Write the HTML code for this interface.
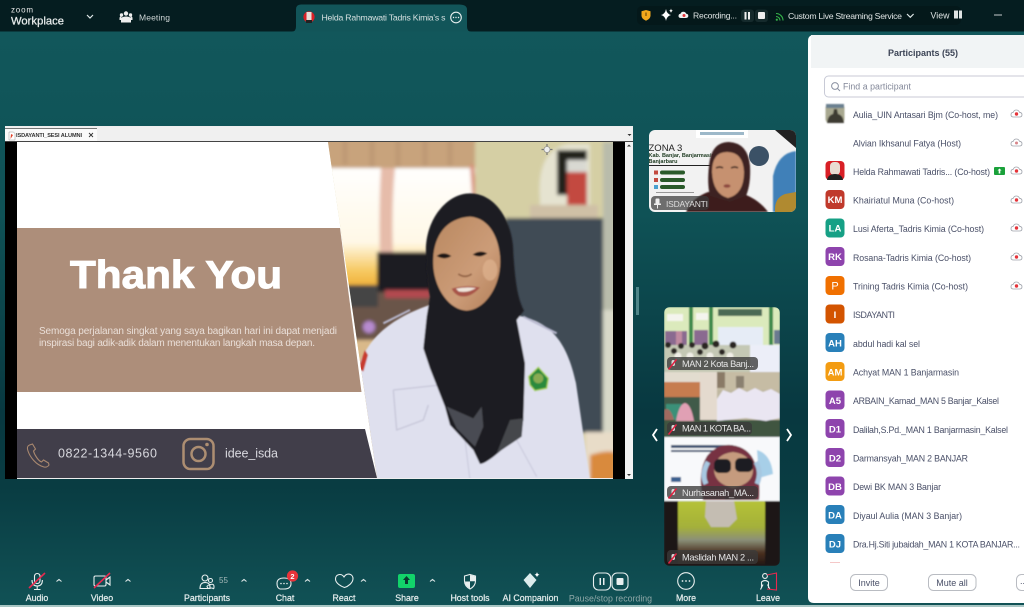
<!DOCTYPE html>
<html><head><meta charset="utf-8"><style>
html,body{margin:0;padding:0;background:#0e4a4e;width:1024px;height:607px;overflow:hidden}
svg{display:block;filter:blur(.3px)}
text{font-family:"Liberation Sans",sans-serif}
.p{font-size:8.8px;fill:#4a5068}
.av{font-size:9.5px;font-weight:bold;fill:#fff;text-anchor:middle}
.lb{font-size:8.8px;fill:#e4ecec;stroke:#e4ecec;stroke-width:.22;text-anchor:middle}
.n{font-size:9.2px;fill:#e6e6e6}
.ic{fill:none;stroke:#e8efef;stroke-width:1.1}
.sl{stroke:#e8294f;stroke-width:1.6;fill:none}
.ch{fill:none;stroke:#dfe8e8;stroke-width:1.2}
</style></head><body>
<svg width="1024" height="607" viewBox="0 0 1024 607" xmlns="http://www.w3.org/2000/svg">
<defs>
<linearGradient id="bg" x1="0" y1="0" x2="0" y2="1">
<stop offset="0" stop-color="#12585c"/><stop offset=".35" stop-color="#0f5256"/><stop offset=".68" stop-color="#083840"/><stop offset=".8" stop-color="#093c42"/><stop offset="1" stop-color="#115256"/></linearGradient>
<linearGradient id="win" x1="0" y1="0" x2="0" y2="1"><stop offset="0" stop-color="#fff"/><stop offset=".62" stop-color="#fff8e6"/><stop offset=".85" stop-color="#f6c860"/><stop offset="1" stop-color="#eeaa30"/></linearGradient>
<linearGradient id="skin" x1="0" y1="0" x2="1" y2="1"><stop offset="0" stop-color="#b98860"/><stop offset=".6" stop-color="#cc9c78"/><stop offset="1" stop-color="#b27e58"/></linearGradient>
<linearGradient id="c4" x1="0" y1="0" x2="0" y2="1"><stop offset="0" stop-color="#b5c236"/><stop offset=".4" stop-color="#a4b03a"/><stop offset=".6" stop-color="#8a8f78"/><stop offset=".8" stop-color="#4a3020"/><stop offset="1" stop-color="#1e1512"/></linearGradient>
<filter id="b1" x="-10%" y="-10%" width="120%" height="120%"><feGaussianBlur stdDeviation="1.8"/></filter>
<filter id="b2" x="-10%" y="-10%" width="120%" height="120%"><feGaussianBlur stdDeviation=".8"/></filter>
<filter id="b3" x="-10%" y="-10%" width="120%" height="120%"><feGaussianBlur stdDeviation="2.4"/></filter>
<clipPath id="photo"><polygon points="328,142 613,142 613,478 377,478"/></clipPath>
<clipPath id="t0"><rect x="649" y="130" width="147" height="82" rx="6"/></clipPath>
<clipPath id="t1"><rect x="664" y="307" width="116" height="259" rx="6"/></clipPath>
</defs>
<rect width="1024" height="607" fill="url(#bg)"/>
<rect x="0" y="605" width="1024" height="2" fill="#a8c6c4"/>

<!-- top bar -->
<rect width="1024" height="31.5" fill="#051d20"/>
<text x="11" y="12.500" font-size="8" fill="#e8e8e8" textLength="22">zoom</text>
<text x="11" y="24.500" font-size="11.200" fill="#e8ecec" stroke="#e8ecec" stroke-width=".25" textLength="53">Workplace</text>
<path d="M87 15l3 3 3-3" class="ch"/>
<g fill="#eee"><circle cx="126" cy="13.500" r="2.200"/><circle cx="121.500" cy="15" r="1.700"/><circle cx="130.500" cy="15" r="1.700"/><path d="M121 22.500v-3q0-3 5-3t5 3v3z"/><path d="M119.500 20v-2q0-1.500 2-2v4zM132.500 20v-2q0-1.500-2-2v4z"/></g>
<text x="139" y="20.500" font-size="8.500" fill="#cfd6d6" textLength="31">Meeting</text>

<path d="M292 31.500q4 0 4-5v-17q0-5 5-5h158q8 0 8 5v17q0 5 4 5z" fill="#125559"/>
<circle cx="309" cy="17" r="5.600" fill="#d81f26"/><rect x="306.500" y="12" width="5" height="10" fill="#e8dcd6"/><rect x="306" y="20" width="6" height="3" fill="#222"/>
<text x="321.500" y="20.500" font-size="8.700" fill="#d5e0e0" textLength="124">Helda Rahmawati Tadris Kimia's s</text>
<circle cx="456" cy="17.500" r="5.300" class="ic"/><g fill="#e8efef"><circle cx="453.500" cy="17.500" r=".7"/><circle cx="456" cy="17.500" r=".7"/><circle cx="458.500" cy="17.500" r=".7"/></g>

<rect x="637" y="6" width="324" height="19" rx="5" fill="#04181a"/>
<path d="M646 10l4.500 1.300v4.500q0 3-4.500 5-4.500-2-4.500-5v-4.500z" fill="#f2a71c"/><rect x="645.500" y="12.500" width="1" height="3.500" fill="#5a3a00"/>
<path d="M666 9q.8 5 5 6-4.200 1-5 6-.8-5-5-6 4.200-1 5-6z" fill="#fff"/><path d="M671 8.500q.3 2 2 2.300-1.700.3-2 2.300-.3-2-2-2.300 1.700-.3 2-2.300z" fill="#fff"/>
<path d="M681 18q-2.500 0-2.500-2t2-2.200q.7-2 2.800-2t3 2q2 .2 2 2.100t-2.300 2.100z" fill="#f1f1f1"/><circle cx="684" cy="15.500" r="1.500" fill="#e5343a"/>
<text x="693" y="18.500" font-size="8.600" fill="#dfe4e4" textLength="44">Recording...</text>
<rect x="741" y="9.500" width="13" height="12.500" rx="3" fill="#152a2c"/><rect x="744.500" y="12" width="2" height="7.500" fill="#eee"/><rect x="748" y="12" width="2" height="7.500" fill="#eee"/>
<rect x="755" y="9.500" width="13" height="12.500" rx="3" fill="#152a2c"/><rect x="758" y="12" width="7" height="7" rx="1" fill="#eee"/>
<g fill="none" stroke="#35b34a" stroke-width="1.100"><path d="M776 13.500a7 7 0 0 1 7 7"/><path d="M776 16.500a4 4 0 0 1 4 4"/></g><circle cx="776.800" cy="19.700" r="1.100" fill="#35b34a"/>
<text x="788" y="19" font-size="8.700" fill="#dfe4e4" textLength="114">Custom Live Streaming Service</text>
<path d="M907 14l3.300 3.300 3.300-3.300" class="ch"/>
<text x="930.500" y="18.500" font-size="8.800" fill="#dfe4e4" textLength="19">View</text>
<rect x="954" y="10.500" width="8" height="8" fill="#e0e4e4"/><rect x="958" y="10.500" width="1" height="8" fill="#051d20"/>
<rect x="994" y="14.500" width="8" height="1" fill="#c8cccc"/>

<!-- shared window -->
<rect x="5" y="126" width="628" height="353" fill="#eee"/>
<rect x="5" y="127" width="628" height="14.500" fill="#f0f0f0"/>
<rect x="5" y="141" width="628" height="1" fill="#444"/>
<rect x="5" y="128.500" width="92" height="12.500" fill="#fafafa"/><rect x="5" y="128" width="92" height=".8" fill="#555"/>
<path d="M9 132h4.500l1.500 1.500v6.500h-6z" fill="#fff" stroke="#999" stroke-width=".5"/><path d="M11 134l2 1-2.500 4z" fill="#e2412a"/>
<text x="16" y="137" font-size="5.600" font-weight="bold" fill="#333" textLength="66">ISDAYANTI_SESI ALUMNI</text>
<path d="M89 133l4 4M93 133l-4 4" stroke="#333" stroke-width=".9"/>
<path d="M628 134l2 2 2-2z" fill="#333" transform="translate(-.500,0)"/>
<rect x="5" y="142" width="12" height="337" fill="#000"/>
<rect x="17" y="142" width="596" height="336" fill="#fff"/>
<rect x="613" y="142" width="12" height="337" fill="#000"/>
<rect x="625" y="142" width="8" height="337" fill="#f3f3f3"/>
<path d="M627 146.500l2-2 2 2z M627 474l2 2 2-2z" fill="#333"/>
<rect x="636" y="287" width="3" height="28" fill="#4f8589"/>

<!-- photo -->
<g clip-path="url(#photo)">
<rect x="320" y="142" width="295" height="340" fill="#d7cfa3"/>
<g filter="url(#b1)">
<rect x="320" y="165" width="156" height="125" fill="url(#win)"/>
<rect x="320" y="130" width="156" height="38" fill="#c8a37c"/>
<g stroke="#b89570" stroke-width="5" opacity=".6"><path d="M345 140v25M372 140v28M398 140v28M425 140v26M450 140v26"/></g>
<path d="M381 168q-3 50 0 122h14q-5-70 0-122z" fill="#e6bcaa"/>
<path d="M472 165l4 55" stroke="#d98f7a" stroke-width="4"/>
<rect x="320" y="290" width="190" height="60" fill="#6a5549"/>
<rect x="377" y="252" width="55" height="40" fill="#1a1b20"/>
<rect x="338" y="285" width="40" height="22" fill="#444"/>
<rect x="385" y="290" width="45" height="8" fill="#b24a50"/>
<circle cx="369" cy="327" r="6" fill="#b78bd0"/>
<rect x="330" y="340" width="60" height="140" fill="#d9b98a"/>
<rect x="475" y="142" width="130" height="78" fill="#d5cfa4"/>
<path d="M540 200q-4-50 28-56l22 0v68h-50z" fill="#e5e3d0"/>
<rect x="557" y="150" width="30" height="45" fill="#23201f"/>
<rect x="567" y="160" width="20" height="52" rx="3" fill="#c34a40"/>
<rect x="567" y="160" width="20" height="12" fill="#d9d9d2"/>
<rect x="530" y="205" width="68" height="14" fill="#cfc0a6"/>
<rect x="505" y="218" width="98" height="215" fill="#414c54"/>
<rect x="603" y="142" width="12" height="170" fill="#b9bcab"/>
<rect x="603" y="310" width="12" height="125" fill="#d8d8c8"/>
<rect x="585" y="432" width="30" height="50" fill="#e8dcc8"/>
<path d="M590 455q20-6 25-2v30h-25z" fill="#d98a3c"/>
</g>
<g transform="translate(330,120) scale(.33333)" filter="url(#b3)">
<path d="M85 740C120 640 200 590 295 556L580 590C660 612 710 660 738 790L780 1080H140L108 880Z" fill="#dfe0ee"/>
<path d="M190 810L330 795M190 810L200 930L280 900L295 855" stroke="#c6c6d8" stroke-width="4" fill="none"/>
<path d="M400 920l20 160M560 960l60 110" stroke="#c8c8da" stroke-width="3" fill="none"/>
<path d="M160 610L240 570M580 590L680 640" stroke="#b8b8cf" stroke-width="6" fill="none"/>
<path d="M85 745L105 690L114 705L100 755Z" fill="#c73a2e"/>
<path d="M596 770L625 742L655 775L650 805L615 812L600 795Z" fill="#2c8a3c" stroke="#a9d35a" stroke-width="4"/>
<circle cx="625" cy="775" r="15" fill="#c8c060" opacity=".6"/>
<path d="M288 400C284 300 350 220 420 220C500 220 550 310 550 400C555 470 560 530 582 572L560 600L585 730L580 900C575 940 480 1030 450 1032L430 990L360 915L345 860L300 745L280 685L290 590L300 530C290 480 290 440 288 400Z" fill="#1c1c20"/>
<path d="M350 860L430 895L455 860L460 920L435 980L380 925Z" fill="#4a4c52"/>
<path d="M540 900L580 895L575 950L500 1000Z" fill="#44464c"/>
<path d="M310 440C305 360 340 295 420 290C490 295 515 380 510 440C505 510 460 570 410 572C360 570 315 510 310 440Z" fill="url(#skin)"/>
<ellipse cx="480" cy="450" rx="22" ry="32" fill="#e0b490" opacity=".7"/>
<path d="M320 408q20-16 44 0q-20 14-44 0zM428 404q20-16 44-4q-22 16-44 4z" fill="#1e1412"/>
<path d="M385 462q20 14 40 0" stroke="#8a5a3c" stroke-width="5" fill="none"/>
<path d="M365 506q40-12 85-4q-30 34-62 26q-16-6-23-22z" fill="#a8554a"/>
<path d="M378 506q30-6 60-2q-25 16-52 10z" fill="#f0e6dc"/>
</g>
</g>

<!-- brown + dark bands -->
<polygon points="17,228 340,228 361.500,392 17,392" fill="#ad8e7a"/>
<polygon points="17,429 365,429 377,478 17,478" fill="#413e4a"/>
<text x="70" y="288" font-size="39" font-weight="bold" fill="#fff" stroke="#fff" stroke-width="1" textLength="212" lengthAdjust="spacingAndGlyphs">Thank You</text>
<text x="39" y="334" font-size="10" fill="#eadfd8" textLength="298">Semoga perjalanan singkat yang saya bagikan hari ini dapat menjadi</text>
<text x="39" y="346" font-size="10" fill="#eadfd8" textLength="276">inspirasi bagi adik-adik dalam menentukan langkah masa depan.</text>
<path d="M29.500 445c-2.500 1-2.500 3-1.500 6c2 6 8 14 16 16c2 .5 4-.5 5-2l-.5-2-5-3-2 2c-3-1-7-7-8-11l2-2-3-5z" fill="none" stroke="#a9886f" stroke-width="1.100"/>
<text x="58" y="457.500" font-size="12.500" fill="#d8d8de" textLength="99">0822-1344-9560</text>
<rect x="183.500" y="439" width="30" height="30" rx="7" fill="none" stroke="#ad8e72" stroke-width="2.500"/>
<circle cx="198.500" cy="454" r="7" fill="none" stroke="#ad8e72" stroke-width="2.500"/>
<circle cx="207" cy="444.500" r="1.800" fill="#ad8e72"/>
<text x="225" y="457.500" font-size="12.500" fill="#d8d8de" textLength="53">idee_isda</text>
<path d="M547 144v11M541.500 149.500h11" stroke="#777" stroke-width="1.200"/><circle cx="547" cy="149.500" r="3" fill="#eee" stroke="#888" stroke-width=".6"/>

<!-- speaker thumb -->
<g clip-path="url(#t0)">
<rect x="649" y="130" width="147" height="82" fill="#f2f2f2"/>
<path d="M775 130h21v18z" fill="#222"/>
<rect x="696" y="130" width="52" height="8" fill="#fff"/><rect x="700" y="132" width="44" height="3" fill="#9db8c9"/>
<circle cx="759" cy="156" r="10" fill="#3b5166"/>
<path d="M796 151q-18 2-23 25v36h23z" fill="#3f80b8" filter="url(#b2)"/>
<path d="M775 212q-1-14 10-18l11-2v20z" fill="#b08a30"/>
<text x="648.500" y="151" font-size="9.500" fill="#222">ZONA 3</text>
<text x="648.500" y="157" font-size="5.500" font-weight="bold" fill="#1d3a20">Kab. Banjar, Banjarmasin</text>
<text x="648.500" y="163" font-size="5.500" font-weight="bold" fill="#1d3a20">Banjarbaru</text>
<rect x="649" y="165" width="62" height="1" fill="#222"/>
<g fill="#2a5a2a"><rect x="660" y="170.500" width="25" height="4" rx="2"/><rect x="660" y="178" width="25" height="4" rx="2"/><rect x="660" y="185" width="25" height="4" rx="2"/></g>
<g fill="#c34a40"><rect x="654" y="170.500" width="4" height="4"/><rect x="654" y="178" width="4" height="4"/></g><rect x="654" y="185" width="4" height="4" fill="#4aa0d0"/>
<rect x="656" y="192" width="38" height="1" fill="#999"/>
<g filter="url(#b2)">
<path d="M686 212q6-14 22-20l30 0q20 6 30 20z" fill="#3c1f1c"/>
<path d="M710 196q-3-12-1-30q2-24 20-24q19 1 21 24q1 18-4 30l-16 6z" fill="#3d2120"/>
<path d="M712 172q0-20 15-20q16 0 17 20q0 22-16 26q-15-4-16-26z" fill="#c6916f"/>
<path d="M716 168q4-2 7 0M731 168q4-2 7 0" stroke="#2a1815" stroke-width="1.400" fill="none"/><ellipse cx="727" cy="186" rx="3.500" ry="1.800" fill="#8e4a40"/>
</g>
<rect x="651" y="196" width="58" height="14" rx="4" fill="#3a3a3a" fill-opacity=".72"/>
<rect x="655.500" y="198.500" width="4" height="6" rx="1" fill="#eee"/><rect x="654" y="203.500" width="7" height="1.500" fill="#eee"/><rect x="657" y="205" width="1" height="3.500" fill="#eee"/>
<text x="666" y="207" font-size="8.500" fill="#ddd" textLength="42">ISDAYANTI</text>
</g>

<!-- strip -->
<g clip-path="url(#t1)">
<g filter="url(#b2)">
<!-- cell 1 -->
<rect x="664" y="307" width="116" height="65" fill="#dbeabc"/>
<rect x="689" y="307" width="4" height="40" fill="#3d8a4c"/><rect x="709" y="307" width="4" height="40" fill="#3d8a4c"/><rect x="769" y="307" width="4" height="40" fill="#3d8a4c"/>
<rect x="667" y="314" width="16" height="7" fill="#f4f4ee"/><rect x="696" y="313" width="12" height="7" fill="#f4f4ee"/>
<rect x="718" y="309" width="44" height="7" fill="#4b6a55"/>
<g fill="#8a6a90"><rect x="665" y="331" width="22" height="14"/><rect x="676" y="331" width="6" height="14" fill="#c08aa0"/><rect x="694" y="330" width="14" height="15"/></g>
<rect x="718" y="327" width="45" height="18" fill="#e6ecf6"/><rect x="774" y="330" width="6" height="14" fill="#6a7a90"/>
<rect x="664" y="345" width="116" height="27" fill="#c4c8b4"/>
<rect x="750" y="345" width="30" height="27" fill="#eceef8"/>
<g fill="#2a2522"><circle cx="668" cy="345" r="3"/><circle cx="681" cy="346" r="3"/><circle cx="692" cy="345" r="3"/><circle cx="705" cy="346" r="3.500"/><circle cx="716" cy="344" r="3.500"/><circle cx="733" cy="345" r="3.500"/><circle cx="674" cy="351" r="3"/><circle cx="700" cy="352" r="3"/><circle cx="722" cy="352" r="3"/></g>
<g fill="#f0eee6"><circle cx="678" cy="356" r="3.500"/><circle cx="690" cy="356" r="3.500"/><circle cx="710" cy="356" r="3.500"/><circle cx="730" cy="356" r="3.500"/></g>
<!-- cell 2 -->
<rect x="664" y="372" width="116" height="65" fill="#bfb8a0"/>
<rect x="664" y="372" width="40" height="12" fill="#e2dccf"/>
<rect x="664" y="382" width="36" height="15" fill="#c67c50"/>
<rect x="664" y="397" width="36" height="40" fill="#3f5a4a"/>
<rect x="666" y="404" width="16" height="16" fill="#3a9078"/>
<rect x="700" y="372" width="17" height="48" fill="#e4dace"/>
<rect x="717" y="372" width="63" height="18" fill="#c6bca4"/>
<rect x="717" y="372" width="8" height="16" fill="#8a7a66"/><rect x="736" y="376" width="8" height="12" fill="#8a8070"/>
<rect x="664" y="420" width="116" height="17" fill="#3f5440"/>
<path d="M717 421v-22l6-9 8 3 8-5 8 4 8-4 8 4 8-3 9 5v24l-14 3-20-3z" fill="#eae6f2"/>
<path d="M676 421q3-17 9-18 6 1 9 18z" fill="#e0a0b4"/>
<path d="M664 420v-10q6-4 10 10z" fill="#a06a60"/>
<!-- cell 3 -->
<rect x="664" y="437" width="116" height="64" fill="#f8f9fb"/>
<rect x="671" y="445" width="62" height="3" fill="#3a5070"/><rect x="671" y="450" width="52" height="2" fill="#3a5070"/>
<rect x="671" y="477" width="10" height="5" fill="#3a6090"/>
<path d="M757 450q14 4 16 24l-14 4z" fill="#a7cfe8"/>
<path d="M703 500q-6-28 4-44q10-12 24-11q18 2 24 18q6 20 4 37z" fill="#773343"/>
<path d="M714 470q1-16 19-18q18 2 20 18q0 14-20 18q-18-4-19-18z" fill="#c59b7e"/>
<path d="M725 490q8 4 16 0l0 10h-16z" fill="#5c2a36"/>
<path d="M708 462q-7 12-2 22M756 462q6 10 1 22" stroke="#a7c7e0" stroke-width="5" fill="none"/>
<rect x="714" y="459" width="17" height="14" rx="5" fill="#1e1e22"/><rect x="735" y="458" width="18" height="14" rx="5" fill="#1e1e22"/>
<!-- cell 4 -->
<rect x="664" y="501" width="116" height="65" fill="#1a1513"/>
<rect x="678" y="501" width="87" height="65" fill="url(#c4)"/>
<path d="M706 501h28l3 18-8 8h-18l-6-10z" fill="#c4bdb2"/>
</g>
<g fill="#3a3a3a" fill-opacity=".78">
<rect x="667" y="357" width="91" height="13" rx="4"/><rect x="667" y="422" width="85" height="13" rx="4"/><rect x="667" y="486" width="91" height="13" rx="4"/><rect x="667" y="550" width="91" height="14" rx="4"/>
</g>
<g stroke="#e02040" stroke-width="1.500" fill="#d8d8d8">
<g id="m1"><rect x="671.500" y="360" width="3.500" height="6" rx="1.700" stroke="none"/><path d="M668.500 369.500l8-10" fill="none"/></g>
<use href="#m1" y="65"/><use href="#m1" y="129"/><use href="#m1" y="194"/>
</g>
<text x="682" y="367" class="n" textLength="72">MAN 2 Kota Banj...</text>
<text x="682" y="431.500" class="n" textLength="69">MAN 1 KOTA BA...</text>
<text x="682" y="496" class="n" textLength="72">Nurhasanah_MA...</text>
<text x="682" y="560.500" class="n" textLength="72">Maslidah MAN 2 ...</text>
</g>
<path d="M657 429l-4 6 4 6M787 429l4 6-4 6" fill="none" stroke="#fff" stroke-width="1.800"/>

<!-- participants -->
<path d="M808 41q0-6 6-6h210v568h-210q-6 0-6-6z" fill="#fff"/>
<path d="M811 35h213v33h-213z" fill="#f1f4f5"/>
<text x="888" y="56" font-size="9" font-weight="bold" fill="#3c4456" textLength="70">Participants (55)</text>
<rect x="824.500" y="76" width="210" height="21" rx="4" fill="#fff" stroke="#c8cad6"/>
<circle cx="835" cy="86" r="3.400" fill="none" stroke="#8a90a0"/><path d="M837.500 88.500l2.500 2.500" stroke="#8a90a0"/>
<text x="843" y="89.500" font-size="8.800" fill="#838899" textLength="68">Find a participant</text>
<g filter="url(#b2)"><rect x="825.500" y="104" width="19" height="19" rx="4" fill="#a8a890"/><path d="M827 123q1-8 6-9l1-5 3 0 1 5q5 1 6 9z" fill="#3c3a30"/><rect x="826" y="104" width="18" height="4" fill="#6a8090"/></g>
<text x="853" y="118" class="p" textLength="145">Aulia_UIN Antasari Bjm (Co-host, me)</text>
<text x="853" y="146.500" class="p" textLength="108">Alvian Ikhsanul Fatya (Host)</text>
<rect x="825.500" y="161" width="19" height="19" rx="4" fill="#d81f26"/><rect x="830" y="162" width="10" height="13" rx="4" fill="#e9dcd2"/><path d="M827 180q1-6 8-6t8 6z" fill="#222"/>
<text x="853" y="175" class="p" textLength="137">Helda Rahmawati Tadris... (Co-host)</text>
<rect x="994" y="167" width="11" height="8" rx="1" fill="#1aa13a"/><path d="M999.500 168.500l2 2h-1.200v3h-1.600v-3h-1.200z" fill="#fff"/>
<rect x="825.500" y="190" width="19" height="19" rx="4" fill="#c0392b"/><text x="835" y="203" class="av">KM</text>
<text x="853" y="203.500" class="p" textLength="101">Khairiatul Muna (Co-host)</text>
<rect x="825.500" y="218.500" width="19" height="19" rx="4" fill="#16a085"/><text x="835" y="231.500" class="av">LA</text>
<text x="853" y="232" class="p" textLength="131">Lusi Aferta_Tadris Kimia (Co-host)</text>
<rect x="825.500" y="247" width="19" height="19" rx="4" fill="#8e44ad"/><text x="835" y="260" class="av">RK</text>
<text x="853" y="261" class="p" textLength="118">Rosana-Tadris Kimia (Co-host)</text>
<rect x="825.500" y="276" width="19" height="19" rx="4" fill="#f07000"/><text x="835" y="289.500" class="av" style="font-size:11px;font-weight:normal">P</text>
<text x="853" y="289.500" class="p" textLength="115">Trining Tadris Kimia (Co-host)</text>
<rect x="825.500" y="304.500" width="19" height="19" rx="4" fill="#d35400"/><text x="835" y="318" class="av">I</text>
<text x="853" y="318" class="p" textLength="42">ISDAYANTI</text>
<rect x="825.500" y="333" width="19" height="19" rx="4" fill="#2980b9"/><text x="835" y="346.500" class="av">AH</text>
<text x="853" y="347" class="p" textLength="67">abdul hadi kal sel</text>
<rect x="825.500" y="362" width="19" height="19" rx="4" fill="#f39c12"/><text x="835" y="375.500" class="av">AM</text>
<text x="853" y="375.500" class="p" textLength="106">Achyat MAN 1 Banjarmasin</text>
<rect x="825.500" y="390.500" width="19" height="19" rx="4" fill="#8e44ad"/><text x="835" y="404" class="av">A5</text>
<text x="853" y="404" class="p" textLength="146">ARBAIN_Kamad_MAN 5 Banjar_Kalsel</text>
<rect x="825.500" y="419" width="19" height="19" rx="4" fill="#8e44ad"/><text x="835" y="432.500" class="av">D1</text>
<text x="853" y="433" class="p" textLength="155">Dalilah,S.Pd._MAN 1 Banjarmasin_Kalsel</text>
<rect x="825.500" y="448" width="19" height="19" rx="4" fill="#8e44ad"/><text x="835" y="461.500" class="av">D2</text>
<text x="853" y="461.500" class="p" textLength="115">Darmansyah_MAN 2 BANJAR</text>
<rect x="825.500" y="476.500" width="19" height="19" rx="4" fill="#8e44ad"/><text x="835" y="490" class="av">DB</text>
<text x="853" y="490" class="p" textLength="88">Dewi BK MAN 3 Banjar</text>
<rect x="825.500" y="505" width="19" height="19" rx="4" fill="#2980b9"/><text x="835" y="518.500" class="av">DA</text>
<text x="853" y="519" class="p" textLength="109">Diyaul Aulia (MAN 3 Banjar)</text>
<rect x="825.500" y="534" width="19" height="19" rx="4" fill="#2980b9"/><text x="835" y="547.500" class="av">DJ</text>
<text x="853" y="547.500" class="p" textLength="167">Dra.Hj.Siti jubaidah_MAN 1 KOTA BANJAR...</text>
<rect x="830" y="562" width="10" height="1" fill="#f5c8c8"/>
<g id="cl"><path d="M1013.500 117q-2.500 0-2.500-2.300t2.300-2.400q.7-2.300 3-2.300t3.200 2.300q2.500.2 2.500 2.400t-2.500 2.300z" fill="#fff" stroke="#a0a4ac" stroke-width=".8"/><circle cx="1016.500" cy="114" r="1.700" fill="#e5343a"/></g>
<use href="#cl" y="57"/><use href="#cl" y="86"/><use href="#cl" y="114"/><use href="#cl" y="143"/><use href="#cl" y="172"/>
<path d="M1013.500 146q-2.500 0-2.500-2.300t2.300-2.400q.7-2.300 3-2.300t3.200 2.300q2.500.2 2.500 2.400t-2.500 2.300z" fill="#fff" stroke="#a0a4ac" stroke-width=".8"/><circle cx="1016.500" cy="143" r="1.500" fill="#d8868a"/>
<rect x="850.500" y="574.500" width="37" height="16" rx="5" fill="#fff" stroke="#b9bcc2"/>
<text x="869" y="586" font-size="9" fill="#4a5068" text-anchor="middle">Invite</text>
<rect x="928.500" y="574.500" width="47.500" height="16" rx="5" fill="#fff" stroke="#b9bcc2"/>
<text x="952" y="586" font-size="9" fill="#4a5068" text-anchor="middle">Mute all</text>
<rect x="1016.500" y="574.500" width="20" height="16" rx="5" fill="#fff" stroke="#b9bcc2"/>
<text x="1020" y="584" font-size="9" fill="#4a5068">...</text>

<!-- toolbar -->
<g class="ic">
<rect x="34.500" y="573.500" width="5.500" height="10" rx="2.700"/><path d="M32 580q0 6 5.200 6t5.200-6M37.200 586v3M34 589.500h6.500"/>
<rect x="94" y="576" width="12" height="10" rx="1.500"/><path d="M106 580l4-3v8l-4-3"/>
<circle cx="205" cy="578" r="3"/><path d="M200 588.500q0-6 5-6t5 4.500v1.500z"/><circle cx="210.500" cy="580.500" r="2"/><path d="M207 586.500q0-1 3.500-2t3.500 2-1 2-5 0z"/>
<path d="M280 589q-3-1-3-5.500 0-5.500 7-5.500t7 5.500-7 5.500h-2z"/>
<path d="M344.500 587.500c-3-1-9-4-9-8.500 0-5 6-6 8.500-2 3-5 9-3 9 1.500s-5 8-8.500 9z"/>
<path d="M470 574.500l5.500 1.500v5q0 5-5.500 8-5.500-3-5.500-8v-5z"/>
<rect x="593.500" y="573" width="17" height="17" rx="5"/><rect x="612" y="573" width="16" height="17" rx="5"/>
<circle cx="686" cy="581" r="8.300"/>
<circle cx="765" cy="576" r="2.400"/><path d="M761.500 588v-6q3.500-3 7 0v6M760.500 589.500l2.500-5M770 589.500l-2.500-5"/>
</g>
<path d="M470 575l5 1.300v5h-5zM470 581.500v7q-5-3-5-7z" fill="#e8efef"/>
<rect x="398" y="574" width="17" height="14" rx="2" fill="#12d36a"/><path d="M406.500 576l3.500 4h-2v4h-3v-4h-2z" fill="#0a3a30"/>
<g fill="#e8efef"><rect x="599.500" y="578" width="1.500" height="7"/><rect x="603" y="578" width="1.500" height="7"/><rect x="616.500" y="578" width="7" height="7" rx="1"/>
<circle cx="682.500" cy="581" r=".9"/><circle cx="686" cy="581" r=".9"/><circle cx="689.500" cy="581" r=".9"/>
<circle cx="281" cy="583.500" r=".8"/><circle cx="284" cy="583.500" r=".8"/><circle cx="287" cy="583.500" r=".8"/></g>
<path d="M767 575l9.500-2v17l-9.500-1" fill="none" stroke="#e8294f" stroke-width="1.100"/>
<path d="M29 588l16-15M94 588l16-15" class="sl"/>
<path d="M530 573l6.500 7-6.500 8-6.500-8z" fill="#dcecec"/><path d="M537 572q.4 2.300 2.500 2.700-2.100.4-2.500 2.700-.4-2.300-2.500-2.700 2.100-.4 2.500-2.700z" fill="#fff"/>
<circle cx="292.500" cy="576" r="5.600" fill="#e8333a"/><text x="292.500" y="579" font-size="7.500" font-weight="bold" fill="#fff" text-anchor="middle">2</text>
<text x="219" y="583" font-size="8" fill="#a5b8b8">55</text>
<g class="ch" style="stroke-width:1.100"><path d="M56.500 581.500l2.500-2 2.500 2M125.500 581.500l2.500-2 2.500 2M241.500 581.500l2.500-2 2.500 2M305 581.500l2.500-2 2.500 2M361 581.500l2.500-2 2.500 2M430 581.500l2.500-2 2.500 2"/></g>
<text x="37" y="601" class="lb">Audio</text>
<text x="102" y="601" class="lb">Video</text>
<text x="207" y="601" class="lb">Participants</text>
<text x="285" y="601" class="lb">Chat</text>
<text x="344" y="601" class="lb">React</text>
<text x="407" y="601" class="lb">Share</text>
<text x="470" y="601" class="lb">Host tools</text>
<text x="530.500" y="601" class="lb">AI Companion</text>
<text x="610.500" y="601.500" class="lb" style="fill:#8fa8a8;stroke:none">Pause/stop recording</text>
<text x="686" y="601" class="lb">More</text>
<text x="768" y="601" class="lb">Leave</text>
</svg>
</body></html>
